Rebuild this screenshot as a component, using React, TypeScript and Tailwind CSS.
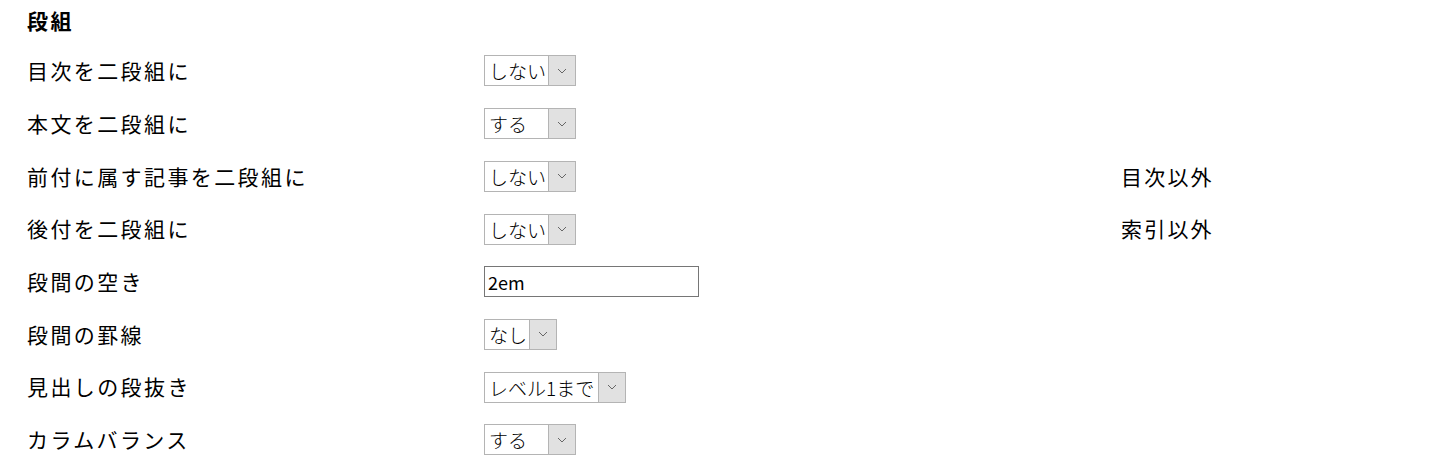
import React from "react";

const font = { fontFamily: '"Noto Sans CJK JP", "Noto Sans", sans-serif' };

const Chevron = () => (
  <svg width="10" height="6" viewBox="0 0 10 6" fill="none">
    <path d="M1 1l4 4 4-4" stroke="#666" strokeWidth="1" />
  </svg>
);

const FakeSelect = ({ value, width }: { value: string; width: string }) => (
  <div className={`flex h-[31px] ${width} border border-[#b4b4b4] bg-white`}>
    <div className="flex-1 pl-[4px] text-[19px] font-light leading-[29px] text-black whitespace-nowrap overflow-hidden">
      {value}
    </div>
    <div className="flex w-[27px] items-center justify-center border-l border-[#b4b4b4] bg-[#e1e1e1]">
      <Chevron />
    </div>
  </div>
);

type Row = { label: string; control: React.ReactNode; note?: string };

const rows: Row[] = [
  { label: "目次を二段組に", control: <FakeSelect value="しない" width="w-[92px]" /> },
  { label: "本文を二段組に", control: <FakeSelect value="する" width="w-[92px]" /> },
  {
    label: "前付に属す記事を二段組に",
    control: <FakeSelect value="しない" width="w-[92px]" />,
    note: "目次以外",
  },
  {
    label: "後付を二段組に",
    control: <FakeSelect value="しない" width="w-[92px]" />,
    note: "索引以外",
  },
  {
    label: "段間の空き",
    control: (
      <input
        readOnly
        value="2em"
        className="h-[31px] w-[215px] border border-[#767676] bg-white px-[3px] text-[18px] text-black outline-none"
      />
    ),
  },
  { label: "段間の罫線", control: <FakeSelect value="なし" width="w-[73px]" /> },
  { label: "見出しの段抜き", control: <FakeSelect value="レベル1まで" width="w-[142px]" /> },
  { label: "カラムバランス", control: <FakeSelect value="する" width="w-[92px]" /> },
];

export default function App() {
  return (
    <div className="h-[467px] w-[1450px] bg-white pl-[27px] text-black" style={font}>
      <div className="flex h-[44.6px] items-center pb-[4px] text-[21px] font-bold tracking-[2.5px]">
        段組
      </div>
      {rows.map((r) => (
        <div key={r.label} className="grid h-[52.7px] grid-cols-[457px_637px_1fr] items-center">
          <div className="text-[21px] tracking-[2.4px]">{r.label}</div>
          <div>{r.control}</div>
          <div className="text-[21px] tracking-[2.2px]">{r.note}</div>
        </div>
      ))}
    </div>
  );
}
